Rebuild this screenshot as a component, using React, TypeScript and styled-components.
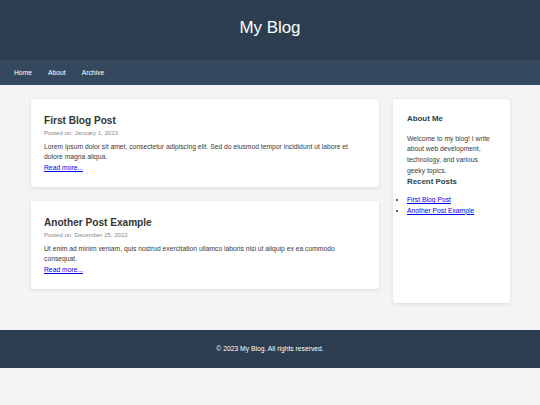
import React, { FC } from 'react'
import styled, { createGlobalStyle } from 'styled-components'

const GlobalStyle = createGlobalStyle`
  * { box-sizing: border-box; }
  body {
    margin: 0;
    background: #f4f4f4;
    font-family: "Liberation Sans", Arial, sans-serif;
    color: #333;
  }
`

const Header = styled.header`
  background: #2c3e50;
  color: #fff;
  height: 60px;
  display: flex;
  align-items: center;
  justify-content: center;
`

const SiteTitle = styled.h1`
  margin: 0 0 5px;
  font-size: 16.9px;
  font-weight: 400;
`

const Nav = styled.nav`
  background: #34495e;
  height: 25px;
  display: flex;
  align-items: center;
  padding: 0 14px;
  gap: 16px;
`

const NavLink = styled.a`
  color: #fff;
  font-size: 6.75px;
  text-decoration: none;
`

const Main = styled.main`
  display: grid;
  grid-template-columns: 348px 117px;
  gap: 14px;
  padding: 14px 30px 27px 31px;
`

const Card = styled.article`
  background: #fff;
  border-radius: 3px;
  box-shadow: 0 1px 4px rgba(0, 0, 0, 0.1);
  padding: 16px 13px 13px;
  margin-bottom: 14px;
`

const PostTitle = styled.h2`
  margin: 0;
  font-size: 10.1px;
  font-weight: 700;
  color: #333;
  line-height: 12px;
`

const PostDate = styled.div`
  font-size: 6.05px;
  line-height: 8px;
  color: #888;
  margin-top: 2px;
`

const PostText = styled.p`
  margin: 4.6px 0 0;
  font-size: 6.75px;
  line-height: 10.8px;
  color: #3a3a3a;
`

const ReadMore = styled.a`
  font-size: 6.75px;
  line-height: 10.8px;
  color: #0000ee;
  text-decoration: underline;
  display: block;
`

const Sidebar = styled.aside`
  background: #fff;
  border-radius: 3px;
  box-shadow: 0 1px 4px rgba(0, 0, 0, 0.1);
  padding: 14.5px 13px 14px 14px;
`

const SideTitle = styled.h3<{ $gap?: number }>`
  margin: ${(p) => p.$gap ?? 0}px 0 0;
  font-size: 7.9px;
  font-weight: 700;
  color: #2c3e50;
  line-height: 10px;
`

const SideText = styled.p`
  margin: 10px 0 0;
  font-size: 6.75px;
  line-height: 10.67px;
  color: #3a3a3a;
`

const RecentList = styled.ul`
  margin: 8.5px 0 0;
  padding-left: 0;
  font-size: 6.75px;
  line-height: 10.7px;
  list-style: disc;
`

const RecentLink = styled.a`
  color: #0000ee;
  text-decoration: underline;
`

const Footer = styled.footer`
  background: #2c3e50;
  color: #fff;
  height: 38px;
  display: flex;
  align-items: center;
  justify-content: center;
  font-size: 6.75px;
`

const posts = [
  {
    title: 'First Blog Post',
    date: 'January 1, 2023',
    text: 'Lorem ipsum dolor sit amet, consectetur adipiscing elit. Sed do eiusmod tempor incididunt ut labore et dolore magna aliqua.',
  },
  {
    title: 'Another Post Example',
    date: 'December 25, 2022',
    text: 'Ut enim ad minim veniam, quis nostrud exercitation ullamco laboris nisi ut aliquip ex ea commodo consequat.',
  },
]

const App: FC = () => {
  return (
    <>
      <GlobalStyle />
      <Header>
        <SiteTitle>My Blog</SiteTitle>
      </Header>
      <Nav>
        <NavLink href="#">Home</NavLink>
        <NavLink href="#">About</NavLink>
        <NavLink href="#">Archive</NavLink>
      </Nav>
      <Main>
        <div>
          {posts.map((post) => (
            <Card key={post.title}>
              <PostTitle>{post.title}</PostTitle>
              <PostDate>Posted on: {post.date}</PostDate>
              <PostText>{post.text}</PostText>
              <ReadMore href="#">Read more...</ReadMore>
            </Card>
          ))}
        </div>
        <Sidebar>
          <SideTitle>About Me</SideTitle>
          <SideText>
            Welcome to my blog! I write about web development, technology, and various geeky topics.
          </SideText>
          <SideTitle $gap={0.5}>Recent Posts</SideTitle>
          <RecentList>
            {posts.map((post) => (
              <li key={post.title}>
                <RecentLink href="#">{post.title}</RecentLink>
              </li>
            ))}
          </RecentList>
        </Sidebar>
      </Main>
      <Footer>© 2023 My Blog. All rights reserved.</Footer>
    </>
  )
}

export default App
